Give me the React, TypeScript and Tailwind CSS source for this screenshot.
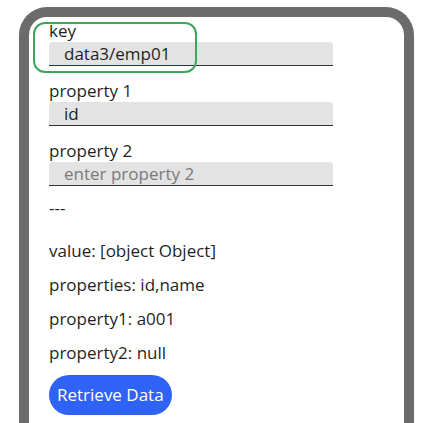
export default function App() {
  const fields = [
    { label: "key", value: "data3/emp01" },
    { label: "property 1", value: "id" },
    { label: "property 2", value: "", placeholder: "enter property 2" },
  ];
  const results = [
    "value: [object Object]",
    "properties: id,name",
    "property1: a001",
    "property2: null",
  ];

  return (
    <div className="h-[423px] w-[431px] overflow-hidden bg-white pl-[19px] pt-[7px] font-['Open_Sans',sans-serif] text-[#1f1f1f]">
      <div className="relative h-[440px] w-[395px] rounded-t-[28px] border-[10px] border-b-0 border-[#6b6b6b] px-[20px] pt-[3px]">
        {fields.map((f) => (
          <div key={f.label} className="mb-[14px]">
            <div className="h-[22px] text-[17px] leading-[22px]">{f.label}</div>
            <input
              readOnly
              value={f.value}
              placeholder={f.placeholder}
              className="block h-[24px] w-[284px] rounded-t-[4px] border-b-[1.5px] border-[#333] bg-[#e3e3e3] pl-[15px] text-[17px] leading-[22px] text-[#1f1f1f] outline-none placeholder:text-[#7a7a7a]"
            />
          </div>
        ))}

        <div className="mt-[-4px] text-[17px] leading-[24px]">---</div>

        <div className="mt-[19px] flex flex-col gap-[10px] text-[17px] leading-[24px]">
          {results.map((r) => (
            <div key={r}>{r}</div>
          ))}
        </div>

        <button className="mt-[10px] h-[40px] rounded-full bg-[#2f63f5] px-[8px] text-[17px] leading-[24px] text-white">
          Retrieve Data
        </button>

        <div className="pointer-events-none absolute left-[4px] top-[5px] h-[51px] w-[164px] rounded-[12px] border-2 border-[#3aa85a]" />
      </div>
    </div>
  );
}
